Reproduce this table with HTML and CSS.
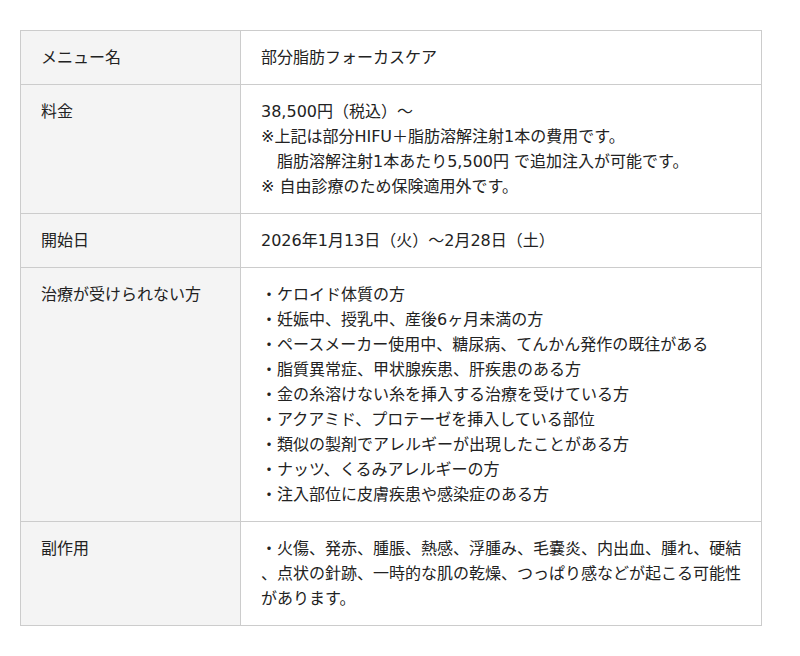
FILE: index.html
```html
<!DOCTYPE html>
<html lang="ja">
<head>
<meta charset="utf-8">
<link rel="stylesheet" href="styles.css">
</head>
<body>
<div class="wrap">
<table class="menu-table">
<colgroup><col class="col-head"><col class="col-body"></colgroup>
<tr><th>メニュー名</th><td>部分脂肪フォーカスケア</td></tr>
<tr><th>料金</th><td>38,500円（税込）～<br>※上記は部分HIFU＋脂肪溶解注射1本の費用です。<br>　脂肪溶解注射1本あたり5,500円 で追加注入が可能です。<br>※ 自由診療のため保険適用外です。</td></tr>
<tr><th>開始日</th><td>2026年1月13日（火）～2月28日（土）</td></tr>
<tr><th>治療が受けられない方</th><td>・ケロイド体質の方<br>・妊娠中、授乳中、産後6ヶ月未満の方<br>・ペースメーカー使用中、糖尿病、てんかん発作の既往がある<br>・脂質異常症、甲状腺疾患、肝疾患のある方<br>・金の糸溶けない糸を挿入する治療を受けている方<br>・アクアミド、プロテーゼを挿入している部位<br>・類似の製剤でアレルギーが出現したことがある方<br>・ナッツ、くるみアレルギーの方<br>・注入部位に皮膚疾患や感染症のある方</td></tr>
<tr><th>副作用</th><td class="wrap-any">・火傷、発赤、腫脹、熱感、浮腫み、毛嚢炎、内出血、腫れ、硬結、点状の針跡、一時的な肌の乾燥、つっぱり感などが起こる可能性があります。</td></tr>
</table>
</div>
</body>
</html>
```

FILE: styles.css
```css
html, body {
  margin: 0;
  padding: 0;
  background: #ffffff;
}
body {
  font-family: "DejaVu Sans", "Noto Sans CJK JP", sans-serif;
  font-size: 16px;
  color: #222222;
}
.wrap {
  padding: 30px 20px;
}
.menu-table {
  width: 742px;
  border-collapse: collapse;
  table-layout: fixed;
}
.col-head {
  width: 220px;
}
.menu-table th,
.menu-table td {
  border: 1px solid #cccccc;
  padding: 14px 20px;
  line-height: 25px;
  text-align: left;
  vertical-align: top;
  font-weight: normal;
}
.menu-table th {
  background: #f4f4f4;
}
.menu-table td {
  background: #ffffff;
  padding-right: 16px;
}
.wrap-any {
  line-break: anywhere;
}
```
